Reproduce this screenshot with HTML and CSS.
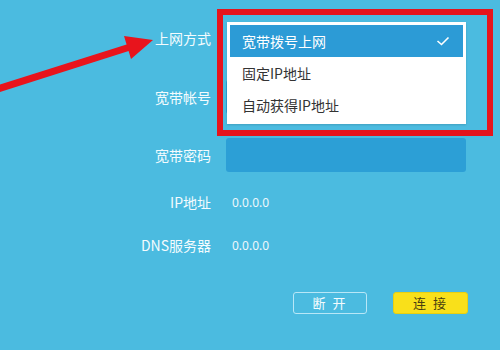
FILE: index.html
```html
<!DOCTYPE html>
<html lang="zh-CN">
<head>
<meta charset="utf-8">
<title>上网设置</title>
<link rel="stylesheet" href="styles.css">
</head>
<body>
<div class="page">
  <form class="form">
    <div class="row row-mode">
      <div class="label">上网方式</div>
      <div class="field">
        <div class="dropdown">
          <div class="option selected"><span>宽带拨号上网</span>
            <svg class="check" width="14" height="10" viewBox="0 0 14 10"><path d="M1.5 5 L5.5 8.5 L12.5 1.5" fill="none" stroke="#fff" stroke-width="1.6"/></svg>
          </div>
          <div class="option">固定IP地址</div>
          <div class="option">自动获得IP地址</div>
        </div>
      </div>
    </div>
    <div class="row row-account">
      <div class="label">宽带帐号</div>
      <div class="field"><div class="input"></div></div>
    </div>
    <div class="row row-password">
      <div class="label">宽带密码</div>
      <div class="field"><div class="input"></div></div>
    </div>
    <div class="row row-ip">
      <div class="label">IP地址</div>
      <div class="field value">0.0.0.0</div>
    </div>
    <div class="row row-dns">
      <div class="label">DNS服务器</div>
      <div class="field value">0.0.0.0</div>
    </div>
    <div class="buttons">
      <button type="button" class="btn btn-outline">断 开</button>
      <button type="button" class="btn btn-primary">连 接</button>
    </div>
  </form>
  <div class="highlight"></div>
  <svg class="arrow" width="160" height="100" viewBox="0 0 160 100">
    <line x1="-4" y1="89.5" x2="130" y2="47" stroke="#e8141c" stroke-width="7"/>
    <polygon points="153,40 124,36 131,59" fill="#e8141c"/>
  </svg>
</div>
</body>
</html>
```

FILE: styles.css
```css
html, body {
  margin: 0;
  padding: 0;
}
body {
  width: 500px;
  height: 350px;
  overflow: hidden;
  background: #4bbbe0;
  font-family: "Noto Sans", "Noto Sans CJK SC", sans-serif;
}
.page {
  position: relative;
  width: 500px;
  height: 350px;
}
.form {
  display: flex;
  flex-direction: column;
  padding-top: 21px;
}
.row {
  display: grid;
  grid-template-columns: 211px 240px;
  column-gap: 15px;
  align-items: center;
  height: 34px;
}
.row-account { margin-top: 25px; }
.row-password { margin-top: 24px; }
.row-ip { margin-top: 13px; }
.row-dns { margin-top: 9px; }
.label {
  text-align: right;
  color: #f4fbfe;
  font-size: 14px;
  font-family: "Noto Sans CJK SC", sans-serif;
}
.field {
  position: relative;
  height: 34px;
  display: flex;
  align-items: center;
}
.value {
  color: #eef8fc;
  font-size: 12px;
  padding-left: 6px;
}
.input {
  width: 240px;
  height: 34px;
  background: #2c9fd6;
  border-radius: 3px;
}
.dropdown {
  position: absolute;
  left: 1px;
  top: 1px;
  width: 233px;
  padding: 3px;
  background: #fff;
  box-shadow: 0 1px 2px rgba(0,0,0,0.15);
  z-index: 2;
}
.option {
  height: 32px;
  display: flex;
  align-items: center;
  justify-content: space-between;
  padding: 0 13px 0 12px;
  font-size: 14px;
  color: #333;
  font-family: "Noto Sans CJK SC", sans-serif;
}
.option.selected {
  background: #2c9bd6;
  color: #fff;
}
.buttons {
  display: flex;
  gap: 26px;
  margin-top: 30px;
  padding-left: 293px;
}
.btn {
  width: 74px;
  height: 22px;
  border-radius: 3px;
  font-size: 13px;
  font-family: "Noto Sans CJK SC", sans-serif;
  padding: 0;
  line-height: 20px;
  letter-spacing: 2px;
}
.btn-outline {
  background: transparent;
  border: 1.5px solid #b8e7f7;
  color: #f4fbfe;
}
.btn-primary {
  width: 75px;
  background: #f9e01a;
  border: 1px solid #e8cf10;
  color: #4a3f10;
}
.highlight {
  position: absolute;
  left: 217px;
  top: 9px;
  width: 264px;
  height: 115px;
  border: 6px solid #e5141c;
  z-index: 3;
}
.arrow {
  position: absolute;
  left: 0;
  top: 0;
  z-index: 3;
}
```
